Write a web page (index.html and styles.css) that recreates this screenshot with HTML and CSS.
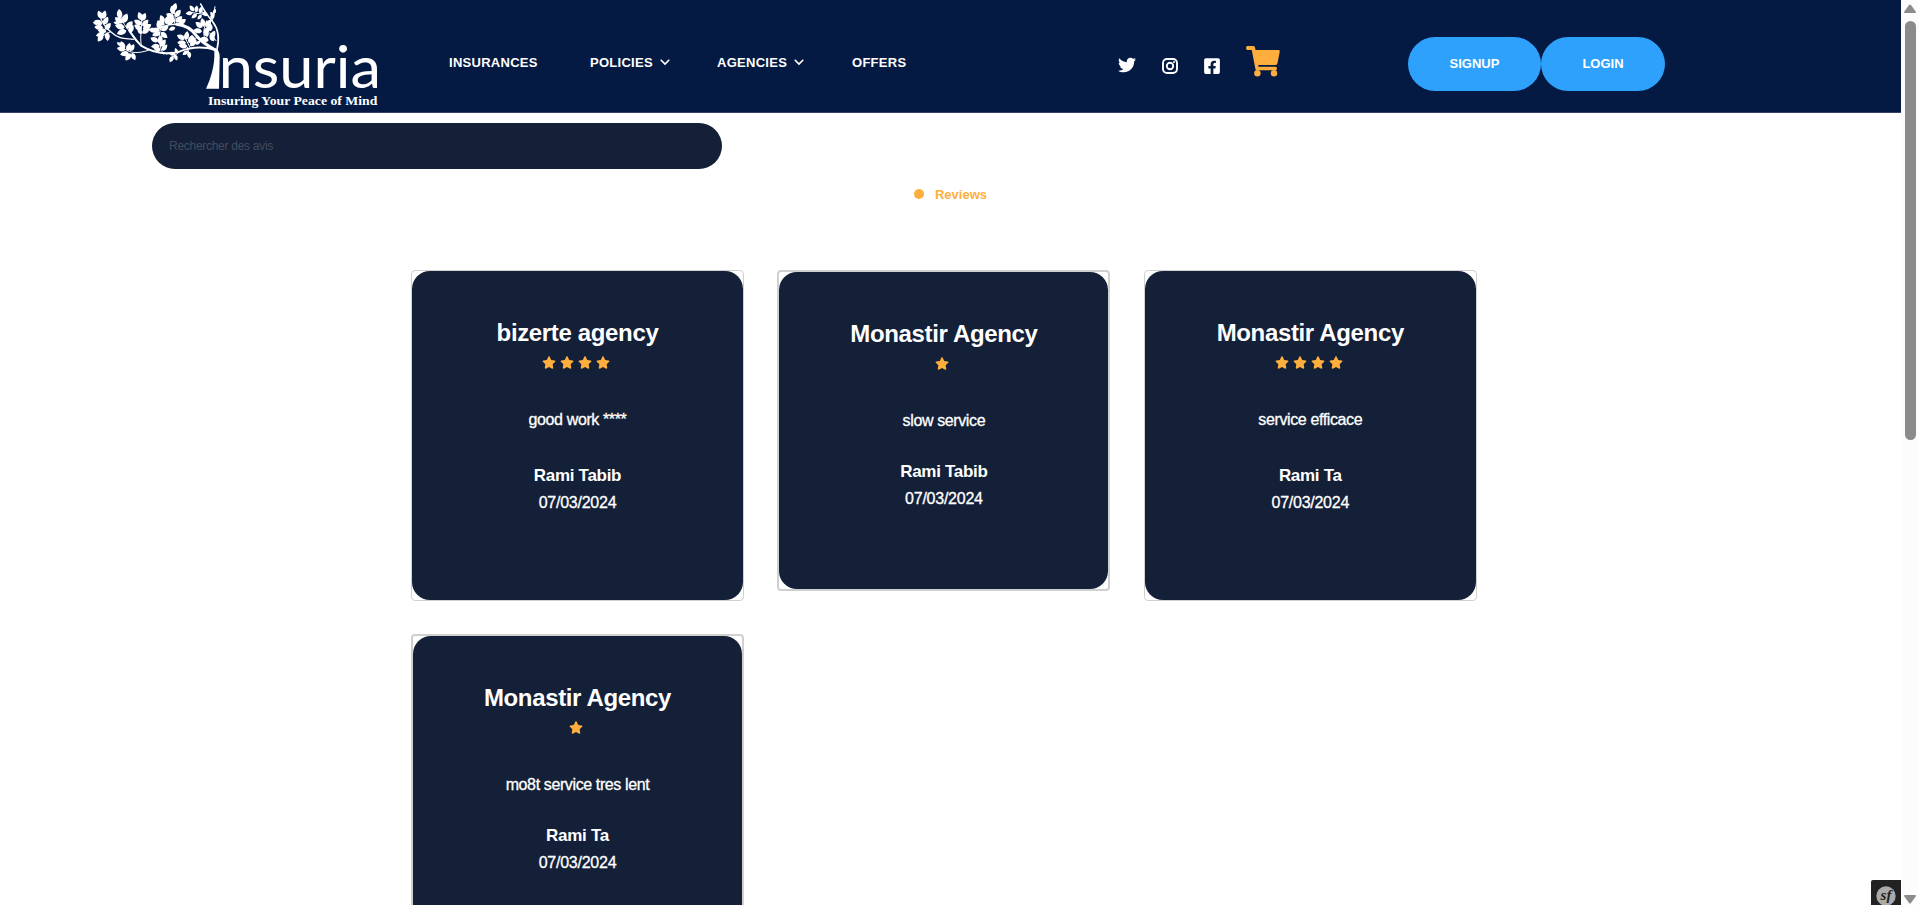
FILE: index.html
```html
<!DOCTYPE html>
<html lang="en">
<head>
<meta charset="utf-8">
<title>Insuria - Reviews</title>
<link rel="stylesheet" href="styles.css">
</head>
<body>
<svg class="defs" width="0" height="0">
  <symbol id="star" viewBox="0 0 576 512"><path d="M316.9 18C311.6 7 300.400 0 288.100 0s-23.400 7-28.800 18L195 150.300 51.400 171.500c-12 1.800-22 10.200-25.700 21.700s-.7 24.200 7.900 32.700L137.800 329 113.200 474.700c-2 12 3 24.200 12.900 31.300s23 8 33.800 2.300l128.300-68.500 128.300 68.500c10.800 5.700 23.900 4.900 33.800-2.300s14.900-19.300 12.900-31.300L438.500 329 542.700 225.900c8.600-8.500 11.700-21.200 7.900-32.700s-13.700-19.900-25.700-21.700L381.200 150.300 316.900 18z"/></symbol>
</svg>
<div class="window">
  <div class="page">
    <header class="header">
      <svg class="logo" viewBox="0 0 930 339">
        <defs><path id="leaf" d="M0 1C-11-5-9-17 0-25C9-17 11-5 0 1Z"/></defs>
        <g class="branches">
          <path stroke-width="9" d="M410 152C385 138 365 128 350 108C335 86 318 76 290 73"/>
          <path stroke-width="4" d="M292 73C270 72 255 76 215 92"/>
          <path stroke-width="6" d="M408 150C370 139 335 140 300 154C255 168 215 156 183 137C168 122 160 110 152 98"/>
          <path stroke-width="4" d="M160 118C135 115 120 120 92 95C78 85 65 70 58 40"/>
          <path stroke-width="3" d="M155 102C140 85 125 65 118 38M184 137C178 105 188 80 184 48M205 151C175 160 155 162 130 145M92 95L58 112M250 162C238 140 232 110 244 80M300 154L270 178M330 142L312 108M350 110L338 135M322 142L328 164"/>
          <path stroke-width="5" d="M411 148C420 110 414 85 398 65C382 46 372 32 362 12"/>
          <path stroke-width="3" d="M397 64L405 20M382 45L325 36M380 122C365 105 372 85 380 62M282 73C292 50 278 35 280 18M408 122L388 98"/>
        </g>
        <path d="M404 144C413 148 420 157 419 172L417 266H378C392 236 405 195 403 155Z"/>
        <g class="leaves">
          <use href="#leaf" transform="translate(65 55) rotate(-25)"/><use href="#leaf" transform="translate(69 56) rotate(15)"/>
          <use href="#leaf" transform="translate(66 72) rotate(-65)"/><use href="#leaf" transform="translate(72 72) rotate(28)"/>
          <use href="#leaf" transform="translate(68 83) rotate(-85)"/><use href="#leaf" transform="translate(76 88) rotate(40)"/>
          <use href="#leaf" transform="translate(78 94) rotate(-82)"/><use href="#leaf" transform="translate(72 101) rotate(-105)"/>
          <use href="#leaf" transform="translate(68 104) rotate(-145)"/><use href="#leaf" transform="translate(81 98) rotate(175)"/>
          <use href="#leaf" transform="translate(55 72) rotate(-70) scale(.7)"/>
          <use href="#leaf" transform="translate(120 54) rotate(-6) scale(1.1)"/><use href="#leaf" transform="translate(127 68) rotate(-55) scale(1.1)"/>
          <use href="#leaf" transform="translate(129 68) rotate(25) scale(1.2)"/><use href="#leaf" transform="translate(133 83) rotate(-75) scale(1.15)"/>
          <use href="#leaf" transform="translate(140 85) rotate(40) scale(1.1)"/><use href="#leaf" transform="translate(138 92) rotate(-108) scale(1.15)"/>
          <use href="#leaf" transform="translate(148 97) rotate(28)"/><use href="#leaf" transform="translate(118 70) rotate(-80) scale(.7)"/>
          <use href="#leaf" transform="translate(184 60) rotate(-18)"/><use href="#leaf" transform="translate(186 62) rotate(25)"/>
          <use href="#leaf" transform="translate(184 73) rotate(-60)"/><use href="#leaf" transform="translate(188 78) rotate(42)"/>
          <use href="#leaf" transform="translate(184 88) rotate(-58)"/><use href="#leaf" transform="translate(190 87) rotate(60) scale(1.1)"/>
          <use href="#leaf" transform="translate(186 101) rotate(-42) scale(.8)"/><use href="#leaf" transform="translate(188 99) rotate(55)"/>
          <use href="#leaf" transform="translate(132 147) rotate(-22)"/><use href="#leaf" transform="translate(135 149) rotate(-78)"/>
          <use href="#leaf" transform="translate(143 153) rotate(15)"/><use href="#leaf" transform="translate(145 159) rotate(-100)"/>
          <use href="#leaf" transform="translate(151 161) rotate(-145)"/><use href="#leaf" transform="translate(156 160) rotate(155) scale(.9)"/>
          <use href="#leaf" transform="translate(151 152) rotate(30) scale(.9)"/><use href="#leaf" transform="translate(125 137) rotate(-55) scale(.7)"/>
          <use href="#leaf" transform="translate(239 91) rotate(-86)"/><use href="#leaf" transform="translate(242 87) rotate(-25)"/>
          <use href="#leaf" transform="translate(244 91) rotate(60)"/><use href="#leaf" transform="translate(240 98) rotate(-110)"/>
          <use href="#leaf" transform="translate(243 98) rotate(130)"/><use href="#leaf" transform="translate(230 92) rotate(-82)"/>
          <use href="#leaf" transform="translate(234 124) rotate(-65)"/><use href="#leaf" transform="translate(238 130) rotate(12)"/>
          <use href="#leaf" transform="translate(238 138) rotate(-94)"/><use href="#leaf" transform="translate(242 139) rotate(36)"/>
          <use href="#leaf" transform="translate(241 151) rotate(-62)"/><use href="#leaf" transform="translate(247 151) rotate(40) scale(.9)"/>
          <use href="#leaf" transform="translate(253 74) rotate(-62)"/><use href="#leaf" transform="translate(250 69) rotate(-18)"/>
          <use href="#leaf" transform="translate(259 72) rotate(12)"/><use href="#leaf" transform="translate(264 74) rotate(42)"/>
          <use href="#leaf" transform="translate(280 42) rotate(-12)"/><use href="#leaf" transform="translate(281 52) rotate(-65)"/>
          <use href="#leaf" transform="translate(287 50) rotate(35)"/><use href="#leaf" transform="translate(284 64) rotate(-55)"/>
          <use href="#leaf" transform="translate(288 66) rotate(48)"/><use href="#leaf" transform="translate(280 33) rotate(18)"/>
          <use href="#leaf" transform="translate(297 72) rotate(55)"/><use href="#leaf" transform="translate(285 83) rotate(-110) scale(.8)"/>
          <use href="#leaf" transform="translate(341 33) rotate(-35) scale(.8)"/><use href="#leaf" transform="translate(348 36) rotate(8) scale(.8)"/>
          <use href="#leaf" transform="translate(337 39) rotate(-95) scale(.8)"/><use href="#leaf" transform="translate(350 42) rotate(-130) scale(.8)"/>
          <use href="#leaf" transform="translate(360 40) rotate(14) scale(.8)"/><use href="#leaf" transform="translate(364 45) rotate(-140) scale(.7)"/>
          <use href="#leaf" transform="translate(382 47) rotate(-55) scale(.8)"/><use href="#leaf" transform="translate(393 56) rotate(30) scale(.8)"/>
          <use href="#leaf" transform="translate(401 41) rotate(22) scale(.6)"/><use href="#leaf" transform="translate(399 48) rotate(-30) scale(.6)"/>
          <use href="#leaf" transform="translate(366 82) rotate(-50)"/><use href="#leaf" transform="translate(371 79) rotate(-12)"/>
          <use href="#leaf" transform="translate(378 80) rotate(35)"/><use href="#leaf" transform="translate(365 94) rotate(-80)"/>
          <use href="#leaf" transform="translate(374 98) rotate(42)"/><use href="#leaf" transform="translate(392 92) rotate(-10)"/>
          <use href="#leaf" transform="translate(382 110) rotate(-18)"/><use href="#leaf" transform="translate(393 114) rotate(28)"/>
          <use href="#leaf" transform="translate(385 121) rotate(-75)"/><use href="#leaf" transform="translate(401 123) rotate(-25)"/>
          <use href="#leaf" transform="translate(313 117) rotate(-62)"/><use href="#leaf" transform="translate(318 118) rotate(10)"/>
          <use href="#leaf" transform="translate(317 129) rotate(-88)"/><use href="#leaf" transform="translate(327 128) rotate(28)"/>
          <use href="#leaf" transform="translate(321 139) rotate(-85)"/><use href="#leaf" transform="translate(331 137) rotate(48)"/>
          <use href="#leaf" transform="translate(343 123) rotate(-30) scale(.8)"/><use href="#leaf" transform="translate(346 132) rotate(65) scale(.7)"/>
          <use href="#leaf" transform="translate(324 153) rotate(-125) scale(.8)"/><use href="#leaf" transform="translate(326 155) rotate(170) scale(.8)"/>
          <use href="#leaf" transform="translate(286 163) rotate(-78) scale(.8)"/><use href="#leaf" transform="translate(291 158) rotate(-20) scale(.6)"/>
          <use href="#leaf" transform="translate(279 169) rotate(-152) scale(.8)"/><use href="#leaf" transform="translate(285 165) rotate(160) scale(.7)"/>
        </g>
        <text class="brand" x="416" y="264" textLength="487" lengthAdjust="spacingAndGlyphs">nsuria</text>
        <text class="tagline" x="384" y="314" textLength="508" lengthAdjust="spacingAndGlyphs">Insuring Your Peace of Mind</text>
      </svg>
      <nav class="nav">
        <a class="nav-item insurances">INSURANCES</a>
        <a class="nav-item policies">POLICIES<svg class="chevron" viewBox="0 0 10 7"><path d="M1.200 1.200L5 5L8.800 1.200"/></svg></a>
        <a class="nav-item agencies">AGENCIES<svg class="chevron" viewBox="0 0 10 7"><path d="M1.200 1.200L5 5L8.800 1.200"/></svg></a>
        <a class="nav-item">OFFERS</a>
      </nav>
      <div class="social">
        <svg class="tw" viewBox="0 0 512 512"><path d="M459.370 151.716c.325 4.548.325 9.097.325 13.645 0 138.720-105.583 298.558-298.558 298.558-59.452 0-114.680-17.219-161.137-47.106 8.447.974 16.568 1.299 25.340 1.299 49.055 0 94.213-16.568 130.274-44.832-46.132-.975-84.792-31.188-98.112-72.772 6.498.974 12.995 1.624 19.818 1.624 9.421 0 18.843-1.300 27.614-3.573-48.081-9.747-84.143-51.980-84.143-102.985v-1.299c13.969 7.797 30.214 12.670 47.431 13.319-28.264-18.843-46.781-51.005-46.781-87.391 0-19.492 5.197-37.360 14.294-52.954 51.655 63.675 129.300 105.258 216.365 109.807-1.624-7.797-2.599-15.918-2.599-24.040 0-57.828 46.782-104.934 104.934-104.934 30.213 0 57.502 12.670 76.670 33.137 23.715-4.548 46.456-13.320 66.599-25.340-7.798 24.366-24.366 44.833-46.132 57.827 21.117-2.273 41.584-8.122 60.426-16.243-14.292 20.791-32.161 39.308-52.628 54.253z"/></svg>
        <svg class="ig" viewBox="0 0 16 16"><rect x="1" y="1" width="14" height="14" rx="4"/><circle cx="8" cy="8" r="3.200"/><circle class="lens" cx="12" cy="4" r="1"/></svg>
        <svg class="fb" viewBox="0 0 448 512"><path d="M400 32H48A48 48 0 0 0 0 80v352a48 48 0 0 0 48 48h137.250V327.690h-63V256h63v-54.640c0-62.150 37-96.480 93.670-96.480 27.140 0 55.520 4.840 55.520 4.840v61h-31.270c-30.810 0-40.420 19.120-40.420 38.730V256h68.780l-11 71.690h-57.780V480H400a48 48 0 0 0 48-48V80a48 48 0 0 0-48-48z"/></svg>
        <svg class="cart" viewBox="0 0 34 31"><path d="M1.500 0H7.500Q8.800 0 9 1.500L9.500 4H32.500Q34 4 33.700 6L31.500 17Q31.200 19 29.500 19H12.200L12.500 20.800H29.500Q31 20.800 31 22.500T29.500 24.300H11Q9.700 24.300 9.400 23L5.800 4H1.500Q0 4 0 2T1.500 0Z"/><circle cx="11.400" cy="27.200" r="3.200"/><circle cx="28" cy="27.200" r="3.200"/></svg>
      </div>
      <div class="auth"><a class="button signup">SIGNUP</a><a class="button login">LOGIN</a></div>
    </header>
    <main>
      <input class="search" type="text" placeholder="Rechercher des avis">
      <div class="heading"><span class="dot"></span>Reviews</div>
      <section class="grid">
        <article class="card good"><div class="body"><h3>bizerte agency</h3><div class="stars"><svg><use href="#star"/></svg><svg><use href="#star"/></svg><svg><use href="#star"/></svg><svg><use href="#star"/></svg></div><p class="comment">good work ****</p><h4>Rami Tabib</h4><p class="date">07/03/2024</p></div></article>
        <article class="card bad"><div class="body"><h3>Monastir Agency</h3><div class="stars"><svg><use href="#star"/></svg></div><p class="comment">slow service</p><h4>Rami Tabib</h4><p class="date">07/03/2024</p></div></article>
        <article class="card good"><div class="body"><h3>Monastir Agency</h3><div class="stars"><svg><use href="#star"/></svg><svg><use href="#star"/></svg><svg><use href="#star"/></svg><svg><use href="#star"/></svg></div><p class="comment">service efficace</p><h4>Rami Ta</h4><p class="date">07/03/2024</p></div></article>
        <article class="card bad"><div class="body"><h3>Monastir Agency</h3><div class="stars"><svg><use href="#star"/></svg></div><p class="comment">mo8t service tres lent</p><h4>Rami Ta</h4><p class="date">07/03/2024</p></div></article>
      </section>
    </main>
    <div class="toolbar"><svg viewBox="0 0 30 25"><circle cx="15" cy="16" r="9.700"/><text x="15" y="19.500" text-anchor="middle">sf</text></svg></div>
  </div>
  <div class="scrollbar"><svg viewBox="0 0 12 10"><path d="M5 1Q6 0 7 1L12 8Q12 9 11 9H1Q0 9 0 8Z"/></svg><div class="thumb"></div><svg class="down" viewBox="0 0 12 10"><path d="M5 9Q6 10 7 9L12 2Q12 1 11 1H1Q0 1 0 2Z"/></svg></div>
</div>
</body>
</html>
```
FILE: styles.css
```css
* { box-sizing: border-box; }
body { margin: 0; font-family: "Liberation Sans", Arial, sans-serif; background: #fff; overflow: hidden; }
.defs { position: absolute; }
.window { display: flex; width: 1918px; height: 905px; overflow: hidden; }
.page { position: relative; width: 1901px; height: 905px; overflow: hidden; }

.header { display: flex; align-items: flex-start; height: 113px; padding-left: 80px; background: #051a43; border-bottom: 1px solid #35436a; color: #fff; }
.logo { width: 310px; height: 113px; flex: none; fill: #fff; }
.branches { fill: none; stroke: #fff; stroke-linecap: round; }
.brand { font-family: Lato, sans-serif; font-size: 176px; font-weight: 400; }
.tagline { font-family: "Liberation Serif", serif; font-size: 36px; font-weight: 700; }

.nav { display: flex; width: 668px; padding: 53px 0 0 59px; flex: none; font-size: 13px; font-weight: 700; line-height: 20px; letter-spacing: .28px; }
.nav-item { display: flex; align-items: center; white-space: nowrap; }
.insurances { width: 141px; }
.policies { width: 127px; }
.agencies { width: 135px; }
.chevron { width: 10px; height: 7px; margin-left: 7px; margin-top: -1px; fill: none; stroke: #fff; stroke-width: 1.6px; stroke-linecap: round; }

.social { display: flex; width: 350px; padding-top: 46px; flex: none; fill: #fff; }
.social svg { flex: none; }
.tw { width: 18px; height: 18px; margin: 10px 0 0 60px; }
.ig { width: 16px; height: 16px; margin: 11.500px 0 0 26px; fill: none; stroke: #fff; stroke-width: 1.900px; }
.lens { fill: #fff; stroke: none; }
.fb { width: 16px; height: 18px; margin: 10.500px 0 0 26px; }
.cart { width: 34px; height: 31px; margin-left: 26px; fill: #fdae3c; }

.auth { display: flex; padding-top: 37px; }
.button { height: 54px; border-radius: 27px; background: #2ea1fd; font-size: 13px; font-weight: 700; line-height: 54px; text-align: center; }
.signup { width: 133px; }
.login { width: 124px; }

.search { display: block; width: 570px; height: 46px; margin: 10px 0 0 152px; padding: 0 17px; border: 0; border-radius: 23px; background: #142037; color: #fff; font: 12px "Liberation Sans", Arial, sans-serif; letter-spacing: -.28px; }
.search::placeholder { color: #434c5f; opacity: 1; }
.heading { display: flex; align-items: center; justify-content: center; gap: 11px; height: 20px; margin-top: 15px; color: #fdae3c; font-size: 13px; font-weight: 700; }
.dot { width: 10px; height: 10px; border-radius: 50%; background: #fdae3c; }

.grid { display: grid; grid-template-columns: repeat(3, 333px); column-gap: 33.400px; row-gap: 33px; align-items: start; margin: 66px 0 0 411px; }
.card { border: 1px solid #d0d0d0; border-radius: 4px; background: #fff; }
.body { padding-top: 47px; border-radius: 18px; background: #142037; color: #fff; text-align: center; }
.good .body { height: 329px; }
.bad { border-width: 2px; }
.bad .body { height: 317px; }
.card h3, .card h4, .card p { margin: 0; white-space: nowrap; }
.card h3 { font-size: 24px; line-height: 30px; letter-spacing: -.35px; }
.stars { display: flex; justify-content: center; gap: 4px; height: 14px; margin: 8px 3px 0 0; }
.stars svg { width: 14px; height: 13px; fill: #fdae3c; }
.card .comment { margin-top: 38px; font-size: 16px; line-height: 24px; letter-spacing: -.38px; -webkit-text-stroke: .3px #fff; }
.card h4 { margin-top: 27px; font-size: 17px; line-height: 24px; letter-spacing: -.3px; }
.good h4 { margin-top: 32px; }
.card .date { margin-top: 3px; font-size: 16px; line-height: 24px; letter-spacing: -.25px; -webkit-text-stroke: .3px #fff; }

.toolbar { position: absolute; right: 0; bottom: 0; width: 30px; height: 25px; background: #222; border-radius: 2px 0 0 0; }
.toolbar svg { display: block; width: 30px; height: 25px; fill: #aaa; }
.toolbar text { fill: #222; font: italic 700 15px "Liberation Serif", serif; }
.scrollbar { display: flex; flex-direction: column; align-items: center; width: 17px; padding: 4px 0 1px 1px; background: #fcfcfc; }
.scrollbar svg { width: 12px; height: 10px; fill: #8b8b8b; }
.thumb { width: 11px; height: 419px; margin-top: 7px; border-radius: 6px; background: #8b8b8b; }
.scrollbar .down { margin-top: auto; }
```
